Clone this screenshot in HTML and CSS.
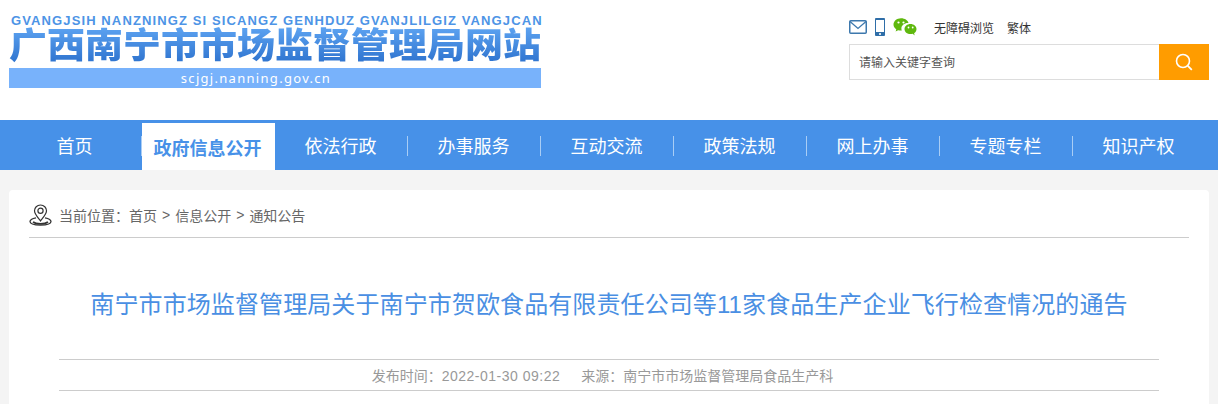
FILE: index.html
```html
<!DOCTYPE html>
<html lang="zh-CN">
<head>
<meta charset="utf-8">
<title>南宁市市场监督管理局</title>
<link rel="stylesheet" href="styles.css">
</head>
<body>
<header class="header">
  <div class="logo">
    <div class="logo-pinyin">GVANGJSIH NANZNINGZ SI SICANGZ GENHDUZ GVANJLILGIZ VANGJCAN</div>
    <div class="logo-title">广西南宁市市场监督管理局网站</div>
    <div class="logo-bar">scjgj.nanning.gov.cn</div>
  </div>
  <div class="tools">
    <div class="tool-row">
      <svg class="ico-mail" width="18" height="14" viewBox="0 0 18 14"><rect x="0.75" y="0.75" width="16.5" height="12.5" rx="1" fill="none" stroke="#3d78ad" stroke-width="1.5"/><path d="M1 1.5 9 8.5 17 1.5" fill="none" stroke="#3d78ad" stroke-width="1.3"/></svg>
      <svg class="ico-phone" width="10" height="18" viewBox="0 0 10 18"><rect x="0.5" y="0.5" width="9" height="17" rx="1.5" fill="none" stroke="#2f6ea8"/><rect x="0" y="0" width="10" height="2" rx="1" fill="#2f6ea8"/><rect x="0" y="14" width="10" height="4" rx="1" fill="#2f6ea8"/><rect x="4" y="15.2" width="2" height="1.6" fill="#fff"/></svg>
      <svg class="ico-wechat" width="24" height="18" viewBox="0 0 24 18"><path d="M8 0.2C3.800 0.2 0.500 3 0.500 6.600c0 2 1.100 3.700 2.800 4.800L2.600 13.600l2.500-1.400c.9.3 1.900.4 2.900.4h.8c-.3-.7-.4-1.300-.4-2 0-3.100 2.900-5.500 6.500-5.500h.6C15.200 2.400 11.900.2 8 .2z" fill="#5fb80e"/><path d="M23.500 11c0-2.900-2.700-5.100-6-5.100s-6 2.200-6 5.100 2.700 5.100 6 5.100c.8 0 1.500-.1 2.200-.3l2 1.800-.6-2.400c1.500-.9 2.400-2.500 2.400-4.200z" fill="#5fb80e"/><circle cx="5.500" cy="4.500" r="1.100" fill="#fff"/><circle cx="10.500" cy="4.500" r="1.100" fill="#fff"/><circle cx="15.500" cy="9.500" r=".9" fill="#fff"/><circle cx="19.700" cy="9.500" r=".9" fill="#fff"/></svg>
      <a class="tool-link tool-link-first">无障碍浏览</a>
      <a class="tool-link">繁体</a>
    </div>
    <div class="search">
      <div class="search-input">请输入关键字查询</div>
      <div class="search-btn">
        <svg width="18" height="18" viewBox="0 0 18 18"><circle cx="8" cy="8" r="6.500" fill="none" stroke="#fff" stroke-width="1.600"/><path d="M12.800 12.800 16.800 16.800" stroke="#fff" stroke-width="1.800" fill="none"/></svg>
      </div>
    </div>
  </div>
</header>
<nav class="nav">
  <a class="nav-item">首页</a>
  <a class="nav-item nav-active">政府信息公开</a>
  <a class="nav-item">依法行政</a>
  <a class="nav-item">办事服务</a>
  <a class="nav-item">互动交流</a>
  <a class="nav-item">政策法规</a>
  <a class="nav-item">网上办事</a>
  <a class="nav-item">专题专栏</a>
  <a class="nav-item nav-last">知识产权</a>
</nav>
<main class="card">
  <div class="crumb">
    <svg class="crumb-ico" width="23" height="22" viewBox="0 0 23 22"><path d="M11.500 1C8 1 5.500 3.600 5.500 6.800c0 3.400 3.900 7.400 6 10.200 2.100-2.800 6-6.800 6-10.200C17.500 3.600 15 1 11.500 1z" fill="none" stroke="#333" stroke-width="1.200"/><circle cx="11.500" cy="6.800" r="2.600" fill="none" stroke="#333" stroke-width="1.200"/><path d="M7 13.800C3.500 14.500 1 15.800 1 17.500 1 19.800 5.700 21 11.500 21S22 19.800 22 17.500c0-1.700-2.500-3-6-3.700" fill="none" stroke="#333" stroke-width="1.300"/><path d="M4 18c1.500 1.100 4.500 1.700 7.500 1.700s6-.6 7.500-1.700" fill="none" stroke="#333" stroke-width="1.600"/></svg>
    <span>当前位置：</span><span>首页</span><span class="crumb-sep">&gt;</span><span>信息公开</span><span class="crumb-sep">&gt;</span><span>通知公告</span>
  </div>
  <h1 class="title">南宁市市场监督管理局关于南宁市贺欧食品有限责任公司等11家食品生产企业飞行检查情况的通告</h1>
  <div class="meta"><span>发布时间：<span class="meta-date">2022-01-30 09:22</span></span><span class="meta-src">来源：南宁市市场监督管理局食品生产科</span></div>
</main>
</body>
</html>
```
FILE: styles.css
```css
* { box-sizing: border-box; }
html, body { margin: 0; height: 404px; overflow: hidden; }
body {
  background: #f4f4f4;
  font-family: "Liberation Sans", "Noto Sans CJK SC", sans-serif;
  color: #333;
}
.header {
  height: 120px;
  background: #fff;
  display: flex;
  justify-content: space-between;
  padding: 12px 9px 0;
}
.logo { width: 532px; }
.logo-pinyin {
  height: 12px;
  padding: 2px 0 0 2px;
  font: bold 13px/13px "Liberation Sans", sans-serif;
  letter-spacing: 1.115px;
  color: #4d94e6;
  white-space: nowrap;
}
.logo-title {
  height: 44px;
  font: 900 38px/38px "Noto Sans CJK SC", sans-serif;
  white-space: nowrap;
  background: linear-gradient(#5aa0ef 4px, #2f74cf 40px);
  background-repeat: no-repeat;
  -webkit-background-clip: text;
  background-clip: text;
  color: transparent;
  transform: scaleY(0.92);
  transform-origin: 50% 47%;
}
.logo-bar {
  height: 20px;
  padding-right: 38px;
  background: #78b2fb;
  color: #fff;
  text-align: center;
  font: 13px/20px "Noto Sans", sans-serif;
  letter-spacing: 1.300px;
}
.tools { width: 360px; padding-top: 6px; }
.tool-row { display: flex; align-items: center; height: 18px; font-size: 12px; color: #333; }
.ico-phone { margin-left: 8px; }
.ico-wechat { margin-left: 8px; }
.tool-link { margin-left: 13px; margin-top: 1px; }
.tool-link-first { margin-left: 17px; }
.search { display: flex; height: 36px; margin-top: 8px; }
.search-input {
  flex: 1;
  border: 1px solid #ddd;
  border-right: 0;
  padding: 1px 0 0 9px;
  font-size: 12px;
  line-height: 34px;
  color: #555;
}
.search-btn {
  width: 50px;
  background: #ff9c00;
  display: flex;
  align-items: center;
  justify-content: center;
}
.nav {
  height: 50px;
  background: #4791e8;
  display: flex;
  padding-left: 9px;
}
.nav-item {
  width: 133px;
  height: 50px;
  padding-right: 2px;
  display: flex;
  align-items: center;
  justify-content: center;
  color: #fff;
  font-size: 18px;
  position: relative;
}
.nav-item::after {
  content: "";
  position: absolute;
  right: 0;
  top: 16px;
  width: 1px;
  height: 20px;
  background: #a9cdf5;
}
.nav-last::after, .nav-active::after { display: none; }
.nav-active {
  height: 47px;
  margin-top: 3px;
  background: #fff;
  color: #4791e8;
  font-weight: bold;
}
.card {
  margin: 20px 9px 0;
  padding: 0 20px;
  background: #fff;
  border-radius: 4px 4px 0 0;
  height: 214px;
}
.crumb {
  height: 48px;
  border-bottom: 1px solid #ccc;
  display: flex;
  align-items: center;
  font-size: 14px;
  color: #666;
  padding-top: 2px;
}
.crumb-ico { margin-right: 7px; }
.crumb-sep { margin: 0 5px; }
.title {
  margin: 0;
  height: 121px;
  padding-top: 50px;
  font: normal 24px/34px "Liberation Sans", "Noto Sans CJK SC", sans-serif;
  letter-spacing: 0.100px;
  color: #4a8fe3;
  text-align: center;
  white-space: nowrap;
}
.meta {
  margin: 0 30px;
  height: 32px;
  padding: 0 13px 1px 0;
  border-top: 1px solid #ccc;
  border-bottom: 1px solid #ccc;
  display: flex;
  justify-content: center;
  align-items: center;
  font-size: 14px;
  color: #999;
}
.meta-date { letter-spacing: 0.500px; }
.meta-src { margin-left: 21px; }
```
